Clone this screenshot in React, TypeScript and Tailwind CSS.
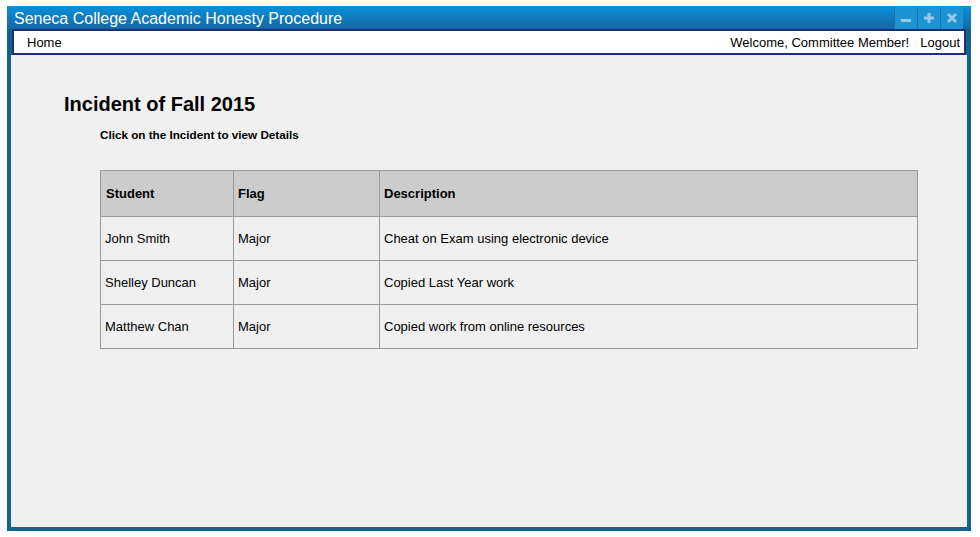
import React from 'react';

// Incident list for the committee member view
const incidents = [
  { student: 'John Smith', flag: 'Major', description: 'Cheat on Exam using electronic device' },
  { student: 'Shelley Duncan', flag: 'Major', description: 'Copied Last Year work' },
  { student: 'Matthew Chan', flag: 'Major', description: 'Copied work from online resources' },
];

function TitleButton({ kind }: { kind: 'min' | 'max' | 'close' }) {
  return (
    <div className="w-[23px] h-[22px] bg-[#1e93d4] border-l border-[#1575ad] flex items-center justify-center">
      <svg width="12" height="12" viewBox="0 0 12 12">
        {kind === 'min' && <rect x="1" y="7" width="10" height="3" fill="#93cbec" />}
        {kind === 'max' && (
          <path d="M4.5 1h3v3.5H11v3H7.5V11h-3V7.5H1v-3h3.5z" fill="#93cbec" />
        )}
        {kind === 'close' && (
          <path d="M2 2l8 8M10 2l-8 8" stroke="#93cbec" strokeWidth="3" />
        )}
      </svg>
    </div>
  );
}

export default function App() {
  return (
    <div className="w-[980px] h-[537px] bg-white pt-[6px] pl-[7px] font-['Liberation_Sans',Arial,sans-serif]">
      <div className="w-[964px] h-[525px] bg-[#14628c] flex flex-col px-[4px] pb-[4px]">
        {/* Title bar */}
        <div className="h-[23px] -mx-[4px] px-[7px] flex items-center justify-between bg-gradient-to-b from-[#0a90dc] to-[#1468a0]">
          <span className="text-white text-[16px] leading-none mt-[2px]">Seneca College Academic Honesty Procedure</span>
          <div className="flex self-start mt-[1px] mr-[1px]">
            <TitleButton kind="min" />
            <TitleButton kind="max" />
            <TitleButton kind="close" />
          </div>
        </div>

        {/* Menu bar */}
        <div className="h-[26px] mx-px bg-white border-2 border-[#1c2f7a] flex items-center justify-between px-[13px] pr-[4px] pt-[2px] text-[13px] text-black">
          <span>Home</span>
          <div className="flex gap-[11px]">
            <span>Welcome, Committee Member!</span>
            <span>Logout</span>
          </div>
        </div>

        {/* Content */}
        <div className="flex-1 bg-[#f0f0f0] pt-[37px] pl-[53px]">
          <h1 className="text-[20px] font-bold text-black leading-[24px]">Incident of Fall 2015</h1>
          <p className="mt-[10px] ml-[36px] text-[11.7px] font-bold text-black">Click on the Incident to view Details</p>

          <table className="mt-[26px] ml-[36px] w-[818px] border-collapse text-[13px] text-black">
            <thead>
              <tr className="bg-[#cccccc] h-[46px]">
                <th className="w-[133px] border border-[#9a9a9a] text-left font-bold px-[5px] pt-[2px]">Student</th>
                <th className="w-[146px] border border-[#9a9a9a] text-left font-bold px-[4px] pt-[2px]">Flag</th>
                <th className="border border-[#9a9a9a] text-left font-bold px-[4px] pt-[2px]">Description</th>
              </tr>
            </thead>
            <tbody>
              {incidents.map((row) => (
                <tr key={row.student} className="h-[44px] cursor-pointer">
                  <td className="border border-[#9a9a9a] px-[4px] pt-[2px]">{row.student}</td>
                  <td className="border border-[#9a9a9a] px-[4px] pt-[2px]">{row.flag}</td>
                  <td className="border border-[#9a9a9a] px-[4px] pt-[2px]">{row.description}</td>
                </tr>
              ))}
            </tbody>
          </table>
        </div>
      </div>
    </div>
  );
}
